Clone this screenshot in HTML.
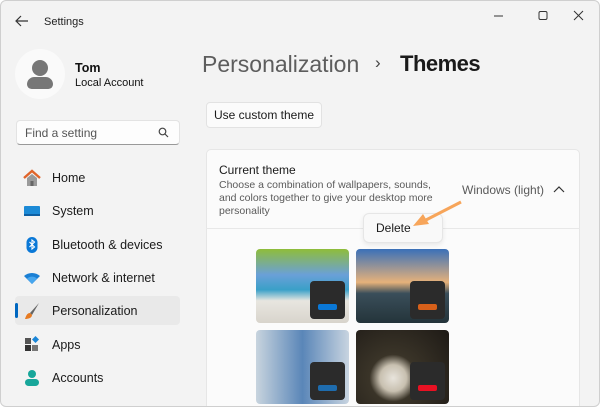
<!DOCTYPE html>
<html><head><style>
*{margin:0;padding:0;box-sizing:border-box}
body{width:600px;height:407px;overflow:hidden;background:#fff;font-family:"Liberation Sans",sans-serif;position:relative}
.win{position:absolute;left:0;top:0;width:600px;height:407px;background:#f3f3f3;border:1px solid #cfcfcf;border-radius:6px;overflow:hidden}
.a{position:absolute}
.nav{font-size:12.5px;color:#1a1a1a;left:51px}
.ic{position:absolute;left:22px;width:18px;height:18px}
.th{position:absolute;width:93px;height:74px;border-radius:4px;overflow:hidden}
.sw{position:absolute;right:4px;bottom:4px;width:35px;height:38px;background:#2b2b2b;border-radius:4px}
.sw i{position:absolute;left:8px;bottom:9px;width:19px;height:6px;border-radius:2px}
</style></head><body><div class="win">
<svg class="a" style="left:14px;top:14px" width="14" height="12"><path d="M13 6H2M6 1L1 6l5 5" stroke="#333" fill="none" stroke-width="1.2"/></svg>
<div class="a" style="left:43px;top:15px;font-size:11px;color:#222">Settings</div>
<svg class="a" style="left:488px;top:8px" width="100" height="14"><path d="M5 7h9" stroke="#333"/><rect x="50" y="2.5" width="8" height="8" rx="1.5" fill="none" stroke="#333"/><path d="M85 2l9 9M94 2l-9 9" stroke="#333"/></svg>
<div class="a" style="left:14px;top:48px;width:50px;height:50px;border-radius:50%;background:#fafafa"></div>
<div class="a" style="left:31px;top:59px;width:16px;height:16px;border-radius:50%;background:#777"></div>
<div class="a" style="left:26px;top:76px;width:26px;height:12px;border-radius:8px 8px 5px 5px;background:#777"></div>
<div class="a" style="left:74px;top:60px;font-size:12.5px;font-weight:bold;color:#111">Tom</div>
<div class="a" style="left:74px;top:76px;font-size:11px;color:#111">Local Account</div>
<div class="a" style="left:15px;top:119px;width:164px;height:25px;background:#fdfdfd;border:1px solid #e3e3e3;border-bottom-color:#999;border-radius:4px"></div>
<div class="a" style="left:24px;top:125px;font-size:12px;color:#555">Find a setting</div>
<svg class="a" style="left:157px;top:126px" width="11" height="11"><circle cx="4.5" cy="4.5" r="3.3" fill="none" stroke="#444" stroke-width="1.2"/><path d="M7 7l3 3" stroke="#444" stroke-width="1.2"/></svg>
<div class="a" style="left:14px;top:295px;width:165px;height:29px;background:#e9e9e9;border-radius:4px"></div>
<div class="a" style="left:14px;top:302px;width:3px;height:15px;background:#0067c0;border-radius:2px"></div>
<svg class="ic" style="top:168px" viewBox="0 0 18 18"><path d="M1 9L9 2l8 7" stroke="#e0642a" stroke-width="2.4" fill="none"/><path d="M4 9v8h10V9L9 5z" fill="#9a9a9a"/><rect x="7.5" y="12" width="3" height="5" fill="#666"/></svg>
<svg class="ic" style="top:201px" viewBox="0 0 18 18"><rect x="1" y="4" width="16" height="10" rx="1" fill="#1c8ad6"/><rect x="1" y="12" width="16" height="2" fill="#0d5fa3"/></svg>
<svg class="ic" style="top:235px" viewBox="0 0 18 18"><rect x="3.5" y="1" width="11" height="16" rx="5.5" fill="#0a78d7"/><path d="M6.5 6l5 5-2.5 2V4l2.5 2-5 5" stroke="#fff" fill="none" stroke-width="1.1"/></svg>
<svg class="ic" style="top:268px" viewBox="0 0 18 18"><path d="M1 7a12 12 0 0 1 16 0L9 15z" fill="#1a7fd4"/><path d="M4 9.5a7.5 7.5 0 0 1 10 0L9 15z" fill="#47a6ee"/></svg>
<svg class="ic" style="top:301px" viewBox="0 0 18 18"><path d="M16 1L7 11l2 2z" fill="#666"/><path d="M7 11c-3 0-4 3-5 6 3 0 7-1 7-4z" fill="#e77b22"/></svg>
<svg class="ic" style="top:334px" viewBox="0 0 18 18"><rect x="2" y="3" width="6" height="6" fill="#555"/><rect x="2" y="10" width="6" height="6" fill="#333"/><rect x="9" y="10" width="6" height="6" fill="#777"/><path d="M12.5 1l3.5 3.5-3.5 3.5L9 4.5z" fill="#1a86d8"/></svg>
<svg class="ic" style="top:368px" viewBox="0 0 18 18"><circle cx="9" cy="5" r="4" fill="#17a69a"/><rect x="2" y="10" width="14" height="7" rx="3.5" fill="#17a69a"/></svg>
<div class="a nav" style="top:170px">Home</div>
<div class="a nav" style="top:203px">System</div>
<div class="a nav" style="top:237px">Bluetooth &amp; devices</div>
<div class="a nav" style="top:270px">Network &amp; internet</div>
<div class="a nav" style="top:303px">Personalization</div>
<div class="a nav" style="top:337px">Apps</div>
<div class="a nav" style="top:370px">Accounts</div>
<div class="a" style="left:201px;top:50px;font-size:23px;color:#5d5d5d">Personalization</div>
<div class="a" style="left:374px;top:52px;font-size:17px;color:#444">›</div>
<div class="a" style="left:399px;top:50px;font-size:22px;color:#1a1a1a;font-weight:bold;letter-spacing:-0.5px">Themes</div>
<div class="a" style="left:205px;top:101px;width:116px;height:26px;background:#fbfbfb;border:1px solid #e2e2e2;border-radius:4px;font-size:12px;color:#1a1a1a;line-height:24px;text-align:center">Use custom theme</div>
<div class="a" style="left:205px;top:148px;width:374px;height:270px;background:#fbfbfb;border:1px solid #e6e6e6;border-radius:5px"></div>
<div class="a" style="left:205px;top:227px;width:374px;height:1px;background:#e8e8e8"></div>
<div class="a" style="left:218px;top:162px;font-size:12px;color:#1a1a1a">Current theme</div>
<div class="a" style="left:218px;top:178px;width:228px;font-size:10.5px;line-height:13px;color:#5a5a5a">Choose a combination of wallpapers, sounds, and colors together to give your desktop more personality</div>
<div class="a" style="left:461px;top:182px;font-size:12px;color:#5a5a5a">Windows (light)</div>
<svg class="a" style="left:552px;top:184px" width="12" height="8"><path d="M1 7l5-5 5 5" stroke="#333" fill="none" stroke-width="1.2"/></svg>
<div class="a" style="left:362px;top:212px;width:80px;height:30px;background:#f9f9f9;border:1px solid #e6e6e6;border-radius:6px;box-shadow:0 2px 5px rgba(0,0,0,.08);font-size:12px;color:#1a1a1a;line-height:28px;padding-left:12px">Delete</div>
<svg class="a" style="left:405px;top:198px" width="60" height="30"><path d="M55 3L18 22" stroke="#f7a55a" stroke-width="3"/><path d="M7 27l10-12 6 10z" fill="#f7a55a"/></svg>
<div class="th" style="left:255px;top:248px;background:linear-gradient(#8fbd3a 0,#6aa0d8 35%,#3aa0c8 55%,#e8e6e0 70%,#d8d4cc 100%)"><div class="sw"><i style="background:#0a78d7"></i></div></div>
<div class="th" style="left:355px;top:248px;background:linear-gradient(#3a70b8 0,#e6b27a 45%,#3a4e5a 60%,#24343a 100%)"><div class="sw"><i style="background:#d7601a"></i></div></div>
<div class="th" style="left:255px;top:329px;background:linear-gradient(90deg,#c8d4de,#5a86b8 50%,#c8d4e0);"><div class="sw"><i style="background:#1e6cae"></i></div></div>
<div class="th" style="left:355px;top:329px;background:radial-gradient(circle at 40% 65%,#e8e4dc 0,#c8c0b0 18%,#3a3428 32%,#1e1a16 100%)"><div class="sw"><i style="background:#e81123"></i></div></div>
</div></body></html>
